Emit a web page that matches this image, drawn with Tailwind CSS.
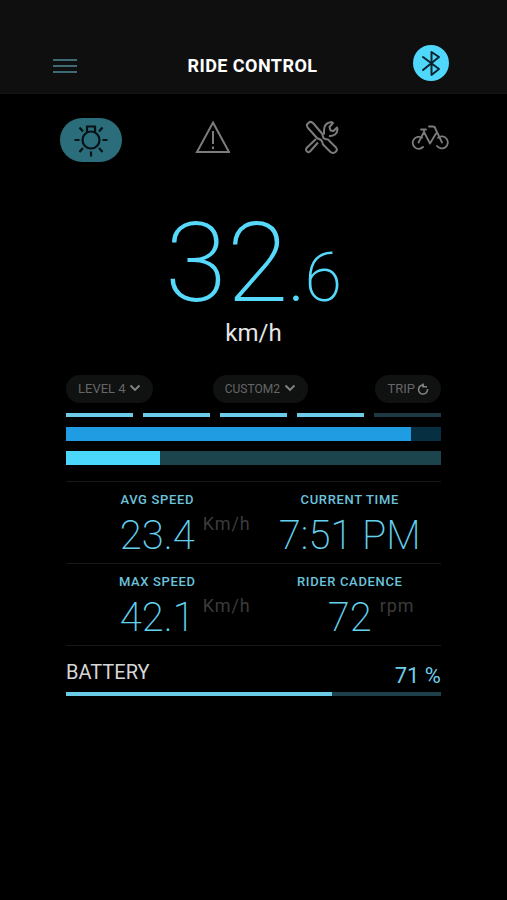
<!DOCTYPE html>
<html lang="en">

<head>
    <meta charset="UTF-8">
    <meta name="viewport" content="width=device-width, initial-scale=1.0">
    <title>Ride Control</title>

    <!-- tailwind -->
    <script src="https://cdn.jsdelivr.net/npm/@tailwindcss/browser@4"></script>
</head>

<body class="bg-black text-white min-h-screen font-['Roboto',sans-serif]">
    <!-- header -->
    <header class="bg-[#0f0f0f] border-b border-[#151515] pt-[45px] pb-3 pl-[52px] pr-[58px] flex items-center justify-between">
        <button type="button" aria-label="Menu" class="w-9 h-9 text-[#3d6a75]">
            <svg class="w-[26px] h-9" viewBox="0 0 26 36" fill="none" stroke="currentColor" stroke-width="2">
                <path d="M1 15h24M1 21h24M1 27h24" />
            </svg>
        </button>
        <h1 class="text-lg font-bold tracking-wide pt-1.5 pl-1">RIDE CONTROL</h1>
        <button type="button" aria-label="Bluetooth" class="w-9 h-9 rounded-full bg-[#4fd8fb] text-[#0b2430]">
            <svg class="w-9 h-9" viewBox="0 0 36 36" fill="none" stroke="currentColor" stroke-width="2" stroke-linejoin="round" stroke-linecap="round">
                <path d="M10 12L26 24L18.500 30V7L26 12L10 25" />
            </svg>
        </button>
    </header>

    <!-- tabs -->
    <nav class="pt-6 pl-[60px] pr-[58px] flex items-start justify-between text-[#7c7c7c]">
        <button type="button" aria-label="Lights" class="w-[62px] h-11 rounded-full bg-[#2b6d7b] text-[#061215]">
            <svg class="w-[62px] h-11" viewBox="0 0 62 44" fill="none" stroke="currentColor" stroke-width="2.200">
                <circle cx="31" cy="22" r="8.500" />
                <path d="M27 14.500V8.500h8v6" />
                <path d="M14.500 22h5M42.500 22h5M31 33.500v5M19.500 9.500l3.500 4M42.500 9.500l-3.500 4M19.500 34l3.500-4M42.500 34l-3.500-4" />
            </svg>
        </button>
        <button type="button" aria-label="Warnings" class="w-9 h-9">
            <svg class="w-9 h-9" viewBox="0 0 36 36" fill="none" stroke="currentColor" stroke-width="2">
                <path d="M19 4.500L35 34H3z" />
                <path d="M19 13v13M19 28.500v2.500" stroke-width="2" />
            </svg>
        </button>
        <button type="button" aria-label="Tools" class="w-9 h-9">
            <svg class="w-9 h-9" viewBox="-1 -1 36 36" fill="none" stroke="currentColor" stroke-width="2" stroke-linejoin="round">
                <path d="M3 5.500L5.500 3Q7 2.500 9 4L18 14.500L19.500 19Q21 20.500 24 20.500L32 28.500Q34 31 31.500 33Q29 35 26.500 33L19 25.500Q18.500 22.500 17 21L13 19L4 9Q2.500 7 3 5.500z" />
                <path d="M14 23.500L6 32.500Q4 34 2.500 32Q1.500 30 3 28.500L12 20" />
                <path d="M20 15.500V11Q20 4 27.500 3L29 4L25.500 8L26.500 11.500L29.500 12L33 8.500Q34.500 12.500 31 15.500Q28 17.500 25 17" />
            </svg>
        </button>
        <button type="button" aria-label="Bike" class="w-[38px] h-9">
            <svg class="w-[38px] h-9" viewBox="0 0 38 36" fill="none" stroke="currentColor" stroke-width="1.800" stroke-linecap="round" stroke-linejoin="round">
                <path d="M12 29A6 6 0 1 1 11 19.800M26 28A6 6 0 1 0 27 19.800" />
                <path d="M7.500 24.500L13 14L19 25.500L25 15.500M10 11.500h5M18 8.500h4Q24 8.500 24.500 11L31 24.500M13 14V11.500" />
            </svg>
        </button>
    </nav>

    <main class="px-[66px]">
        <!-- current speed -->
        <section class="pt-[62px] flex flex-col items-center">
            <p class="text-[#56d9fb] font-extralight text-[112px] leading-[78px]">32<span class="text-[68px] font-light">.</span><span class="text-[68px]">6</span></p>
            <p class="text-2xl leading-8 text-[#e6e6e6]">km/h</p>
        </section>

        <!-- ride mode -->
        <section class="mt-[26px]">
            <div class="flex items-center justify-between text-[#666666]">
                <div class="relative">
                    <select aria-label="Assist level" class="appearance-none h-7 w-[87px] rounded-full bg-[#101111] pl-3 text-[13px]">
                        <option>LEVEL 4</option>
                    </select>
                    <svg class="absolute right-3 top-2 w-3 h-3 pointer-events-none text-[#858585]" viewBox="0 0 12 12" fill="none" stroke="currentColor" stroke-width="1.800">
                        <path d="M1.500 2.500l4.500 4.500l4.500-4.500" />
                    </svg>
                </div>
                <div class="relative mr-2">
                    <select aria-label="Profile" class="appearance-none h-7 w-[95px] rounded-full bg-[#101111] pl-3 text-xs">
                        <option>CUSTOM2</option>
                    </select>
                    <svg class="absolute right-3 top-2 w-3 h-3 pointer-events-none text-[#858585]" viewBox="0 0 12 12" fill="none" stroke="currentColor" stroke-width="1.800">
                        <path d="M1.500 2.500l4.500 4.500l4.500-4.500" />
                    </svg>
                </div>
                <button type="button" class="h-7 rounded-full bg-[#101111] px-3 flex items-center gap-0.5 text-[13px]">
                    TRIP
                    <svg class="w-3 h-3 text-[#858585]" viewBox="0 0 12 12" fill="none" stroke="currentColor" stroke-width="1.500">
                        <path d="M10.500 6A4.500 4.500 0 1 1 7 2.200M6 0.500V3.800H10" />
                    </svg>
                </button>
            </div>
            <div class="mt-2.5 grid grid-cols-5 gap-2.5">
                <div class="h-1 bg-[#6ccbe6]"></div>
                <div class="h-1 bg-[#6ccbe6]"></div>
                <div class="h-1 bg-[#6ccbe6]"></div>
                <div class="h-1 bg-[#6ccbe6]"></div>
                <div class="h-1 bg-[#1e3843]"></div>
            </div>
            <div class="mt-2.5 h-3.5 bg-[#062f42]">
                <div class="h-full bg-[#209de2]" style="width: 92%"></div>
            </div>
            <div class="mt-2.5 h-3.5 bg-[#1b444c]">
                <div class="h-full bg-[#4bd7fb]" style="width: 25%"></div>
            </div>
        </section>

        <!-- stats -->
        <section class="mt-4 text-center">
            <div class="border-t border-[#181818] grid grid-cols-2 gap-2.5 pt-2.5 pb-1">
                <div>
                    <h2 class="text-[13px] leading-4 font-medium tracking-wider text-[#6bc3dc]">AVG SPEED</h2>
                    <p class="mt-1 text-[40px] leading-[47px] font-extralight text-[#63d0ee]">
                        <span class="relative">23.4<span class="absolute left-full top-0 ml-2 text-lg leading-6 font-normal tracking-wider text-[#3b3b3b]">Km/h</span></span>
                    </p>
                </div>
                <div>
                    <h2 class="text-[13px] leading-4 font-medium tracking-wider text-[#6bc3dc]">CURRENT TIME</h2>
                    <p class="mt-1 text-[40px] leading-[47px] font-extralight text-[#63d0ee] whitespace-nowrap">7:51 PM</p>
                </div>
            </div>
            <div class="border-y border-[#181818] grid grid-cols-2 gap-2.5 pt-2.5 pb-1">
                <div>
                    <h2 class="text-[13px] leading-4 font-medium tracking-wider text-[#6bc3dc]">MAX SPEED</h2>
                    <p class="mt-1 text-[40px] leading-[47px] font-extralight text-[#63d0ee]">
                        <span class="relative">42.1<span class="absolute left-full top-0 ml-2 text-lg leading-6 font-normal tracking-wider text-[#3b3b3b]">Km/h</span></span>
                    </p>
                </div>
                <div>
                    <h2 class="text-[13px] leading-4 font-medium tracking-wider text-[#6bc3dc]">RIDER CADENCE</h2>
                    <p class="mt-1 text-[40px] leading-[47px] font-extralight text-[#63d0ee]">
                        <span class="relative">72<span class="absolute left-full top-0 ml-2 text-lg leading-6 font-normal tracking-wider text-[#3b3b3b]">rpm</span></span>
                    </p>
                </div>
            </div>
        </section>

        <!-- battery -->
        <section class="pt-2.5">
            <div class="flex items-center justify-between">
                <h2 class="text-xl leading-8 pb-1 text-[#d6d6d6]">BATTERY</h2>
                <p class="text-[22px] leading-8 pt-1 text-[#6fcde8]">71 %</p>
            </div>
            <div class="h-1 bg-[#1f4048]">
                <div class="h-full bg-[#69cbe6]" style="width: 71%"></div>
            </div>
        </section>
    </main>
</body>

</html>
